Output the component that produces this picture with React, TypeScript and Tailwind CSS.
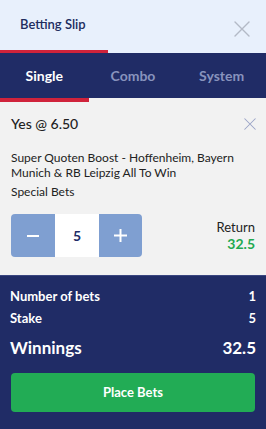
import { useState } from 'react'

const tabs = ['Single', 'Combo', 'System']

function CloseIcon({ size, className }: { size: number; className?: string }) {
  return (
    <svg width={size} height={size} viewBox="0 0 16 16" className={className} fill="none">
      <path d="M1 1L15 15M15 1L1 15" stroke="currentColor" strokeWidth="1.4" strokeLinecap="round" />
    </svg>
  )
}

function Stepper({ value, onChange }: { value: number; onChange: (v: number) => void }) {
  return (
    <div className="flex h-[43px] w-[131px] overflow-hidden rounded-[4px]">
      <button
        className="flex w-[44px] items-center justify-center bg-[#7f9fd1] text-white"
        onClick={() => onChange(Math.max(0, value - 1))}
      >
        <svg width="12" height="12" viewBox="0 0 12 12">
          <path d="M0 6H12" stroke="currentColor" strokeWidth="2" />
        </svg>
      </button>
      <div className="flex w-[44px] items-center justify-center bg-white text-[14px] font-bold text-[#202c66]">
        {value}
      </div>
      <button
        className="flex w-[43px] items-center justify-center bg-[#7f9fd1] text-white"
        onClick={() => onChange(value + 1)}
      >
        <svg width="13" height="13" viewBox="0 0 13 13">
          <path d="M0 6.5H13M6.5 0V13" stroke="currentColor" strokeWidth="2" />
        </svg>
      </button>
    </div>
  )
}

export default function App() {
  const [active, setActive] = useState(0)
  const [stake, setStake] = useState(5)
  const odds = 6.5
  const winnings = +(stake * odds).toFixed(2)

  return (
    <div className="flex h-[429px] w-[266px] flex-col bg-[#202c66] font-['Lato','Open_Sans',sans-serif]">
      {/* Header */}
      <div className="flex h-[50px] items-center justify-between bg-[#e8f0fc] pl-[20px] pr-[16px]">
        <span className="text-[13px] font-semibold text-[#202c5e]">Betting Slip</span>
        <CloseIcon size={16} className="mt-[7px] text-[#b3b9c6]" />
      </div>
      <div className="h-[3px] bg-[#e8f0fc]">
        <div className="h-full w-[108px] bg-[#d0233b]" />
      </div>

      {/* Tabs */}
      <div className="grid h-[45px] grid-cols-3 bg-[#202c66]">
        {tabs.map((t, i) => (
          <button
            key={t}
            onClick={() => setActive(i)}
            className={
              i === active
                ? 'text-[14px] font-bold text-white'
                : 'text-[14px] font-bold text-[#8893bd]'
            }
          >
            {t}
          </button>
        ))}
      </div>

      {/* Bet */}
      <div className="flex flex-col bg-[#f2f2f2]">
        <div className="grid h-[4px] grid-cols-3">
          <div className={active === 0 ? 'bg-[#d0233b]' : ''} />
          <div className={active === 1 ? 'bg-[#d0233b]' : ''} />
          <div className={active === 2 ? 'bg-[#d0233b]' : ''} />
        </div>
        <div className="flex h-[173px] flex-col px-[11px] pt-[11px]">
          <div className="flex items-center justify-between">
            <span className="text-[14px] font-medium text-[#222]">Yes @ 6.50</span>
            <CloseIcon size={12} className="mr-[-1px] text-[#9aa3c6]" />
          </div>
          <p className="mt-[16px] text-[12px] leading-[15px] text-[#222]">
            Super Quoten Boost - Hoffenheim, Bayern Munich &amp; RB Leipzig All To Win
          </p>
          <p className="mt-[4px] text-[12px] leading-[15px] text-[#222]">Special Bets</p>
          <div className="mt-[15px] flex items-start justify-between">
            <Stepper value={stake} onChange={setStake} />
            <div className="mt-[5px] flex flex-col items-end">
              <span className="text-[13px] leading-[16px] text-[#222]">Return</span>
              <span className="text-[14px] font-bold leading-[18px] text-[#22a94f]">{winnings}</span>
            </div>
          </div>
        </div>
      </div>

      {/* Summary */}
      <div className="flex flex-col border-t border-[#3a4680] px-[10px] pt-[12px] text-white">
        <div className="flex items-center justify-between text-[13px] font-bold leading-[16px]">
          <span>Number of bets</span>
          <span>1</span>
        </div>
        <div className="mt-[6px] flex items-center justify-between text-[13px] font-bold leading-[16px]">
          <span>Stake</span>
          <span>{stake}</span>
        </div>
        <div className="mt-[11px] flex items-center justify-between text-[17px] font-bold leading-[22px]">
          <span>Winnings</span>
          <span>{winnings}</span>
        </div>
        <button className="mx-[1px] mt-[14px] h-[39px] rounded-[4px] bg-[#22ac55] text-[13px] font-bold text-white">
          Place Bets
        </button>
      </div>
    </div>
  )
}
